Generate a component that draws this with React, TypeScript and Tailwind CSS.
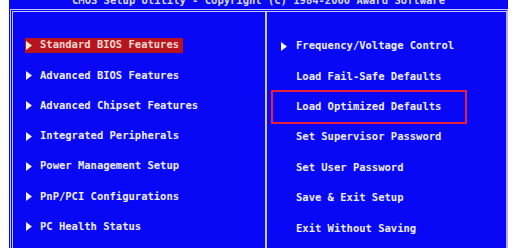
import React from "react";

const leftItems = [
  "Standard BIOS Features",
  "Advanced BIOS Features",
  "Advanced Chipset Features",
  "Integrated Peripherals",
  "Power Management Setup",
  "PnP/PCI Configurations",
  "PC Health Status",
];

const rightItems = [
  { label: "Frequency/Voltage Control", arrow: true },
  { label: "Load Fail-Safe Defaults", arrow: false },
  { label: "Load Optimized Defaults", arrow: false },
  { label: "Set Supervisor Password", arrow: false },
  { label: "Set User Password", arrow: false },
  { label: "Save & Exit Setup", arrow: false },
  { label: "Exit Without Saving", arrow: false },
];

const Arrow = ({ color = "#f4f4ff" }: { color?: string }) => (
  <svg width="6" height="9" viewBox="0 0 6 9" className="shrink-0">
    <polygon points="0,0 6,4.5 0,9" fill={color} />
  </svg>
);

const App = () => {
  return (
    <div
      className="w-[517px] h-[248px] bg-white overflow-hidden flex"
      style={{ fontFamily: '"DejaVu Sans Mono", "Liberation Mono", monospace' }}
    >
      <div className="ml-[9px] w-[499px] h-full bg-[#0808f6] flex flex-col">
        {/* barre de titre, coupée en haut */}
        <div className="h-[9px] overflow-hidden flex justify-center">
          <span className="-mt-[6px] leading-[12px] text-[10.5px] font-bold text-[#d8d8f0] whitespace-pre">
            CMOS Setup Utility - Copyright (C) 1984-2000 Award Software
          </span>
        </div>

        {/* cadre principal */}
        <div className="ml-[1px] flex-1 flex border-t-[3px] border-l-[3px] border-r-[2px] border-double border-t-[#c4c4ff] border-l-[#c4c4ff] border-r-[#b0b0ff]">
          {/* colonne gauche */}
          <div className="w-[252px] pt-[18px] flex flex-col">
            {leftItems.map((item, i) => (
              <div key={item} className="h-[30.3px] flex items-center">
                {i === 0 ? (
                  <div className="ml-[12px] h-[15px] w-[158px] bg-[#b8141e] flex items-center gap-[8px] pl-[1px]">
                    <Arrow color="#f8f0c8" />
                    <span className="text-[10.5px] font-bold text-[#f4d8d0] whitespace-pre">{item}</span>
                  </div>
                ) : (
                  <div className="ml-[13px] flex items-center gap-[8px]">
                    <Arrow />
                    <span className="text-[10.5px] font-bold text-[#ececfa] whitespace-pre">{item}</span>
                  </div>
                )}
              </div>
            ))}
          </div>

          {/* séparateur */}
          <div className="w-[2px] bg-[#c8c8ff]" />

          {/* colonne droite */}
          <div className="flex-1 pt-[19px] flex flex-col relative">
            {rightItems.map((item) => (
              <div key={item.label} className="h-[30.4px] flex items-center">
                <div className="ml-[14px] flex items-center gap-[9px]">
                  {item.arrow ? <Arrow /> : <span className="w-[6px]" />}
                  <span className="text-[10.5px] font-bold text-[#ececfa] whitespace-pre">{item.label}</span>
                </div>
              </div>
            ))}
            {/* cadre rouge autour de Load Optimized Defaults */}
            <div className="absolute left-[4px] top-[78px] w-[196px] h-[34px] border-2 border-[#e8203a]" />
          </div>
        </div>
      </div>
    </div>
  );
};

export default App;
